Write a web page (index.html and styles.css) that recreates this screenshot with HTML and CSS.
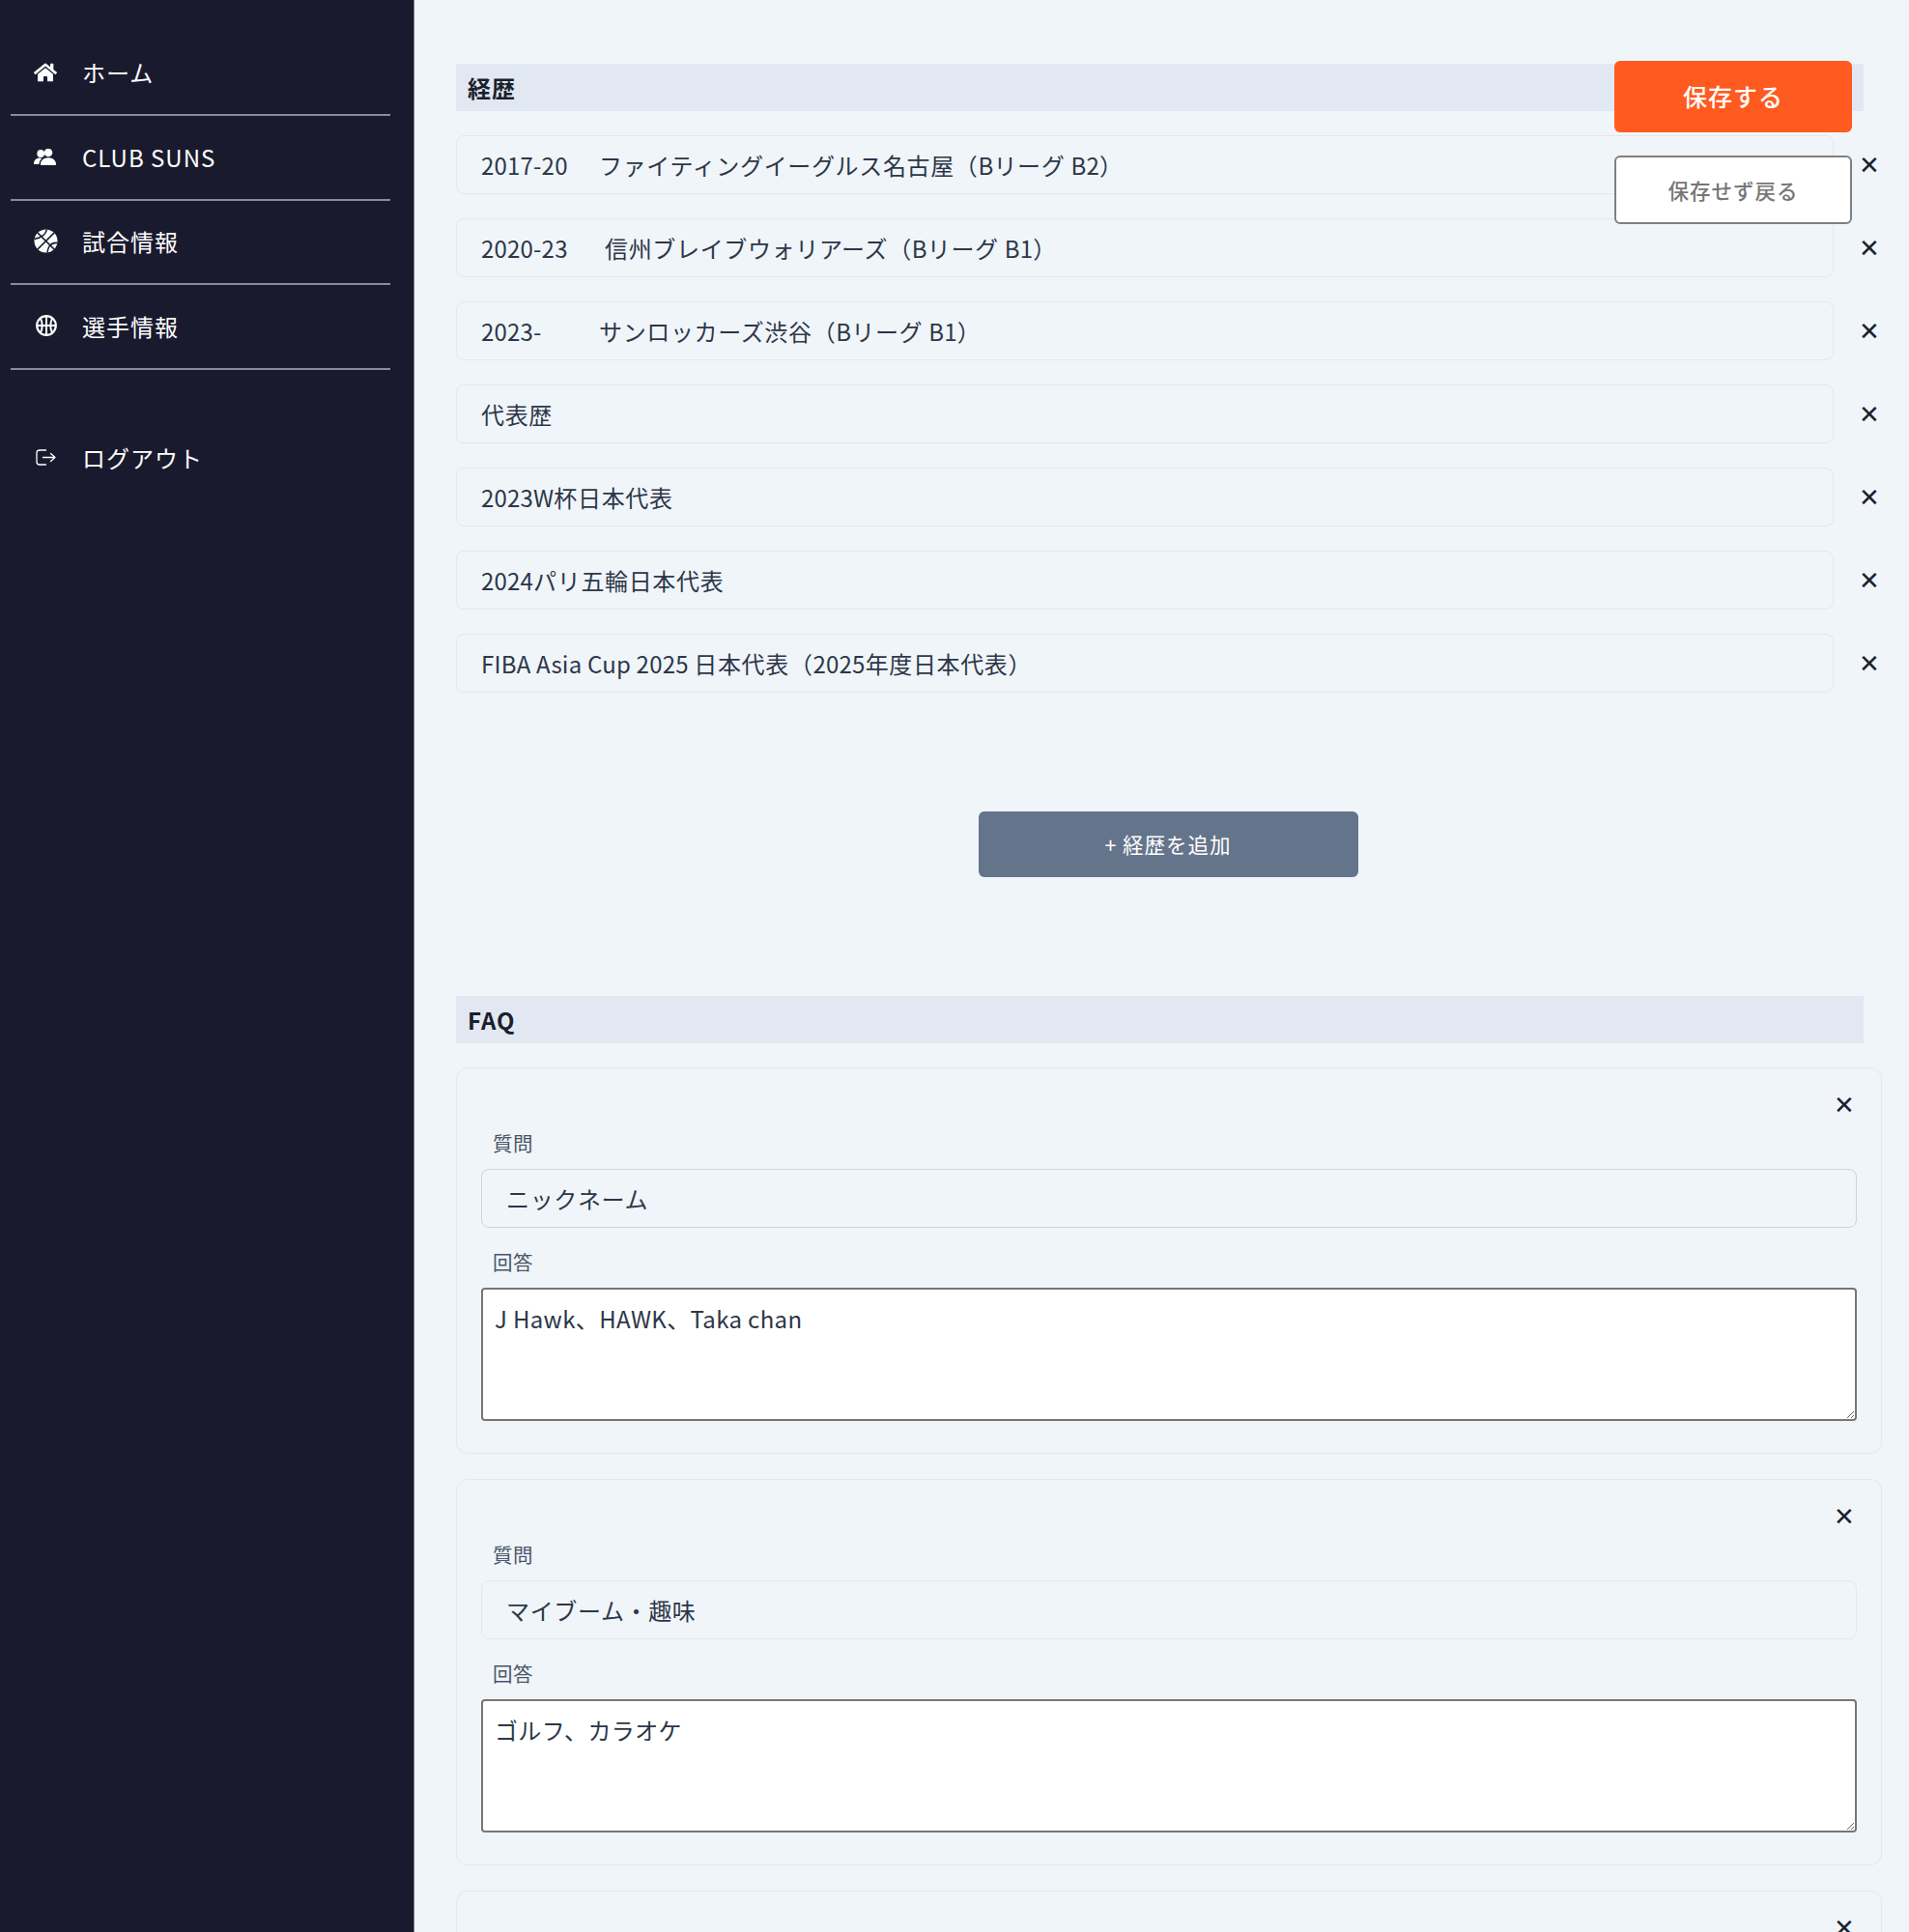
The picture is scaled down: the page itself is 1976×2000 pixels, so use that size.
FILE: index.html
```html
<!DOCTYPE html>
<html lang="ja">
<head>
<meta charset="utf-8">
<title>編集</title>
<link rel="stylesheet" href="styles.css">
</head>
<body>
<div class="app">
  <aside class="sidebar">
    <nav class="nav">
      <a class="nav-item">
        <span class="nav-icon"><svg class="ic-home" viewBox="0 0 576 512"><path fill="#fff" d="M280.37 148.26L96 300.11V464a16 16 0 0 0 16 16l112.06-.29a16 16 0 0 0 15.92-16V368a16 16 0 0 1 16-16h64a16 16 0 0 1 16 16v95.64a16 16 0 0 0 16 16.05L464 480a16 16 0 0 0 16-16V300L295.67 148.26a12.19 12.19 0 0 0-15.3 0zM571.6 251.47L488 182.56V44.05a12 12 0 0 0-12-12h-56a12 12 0 0 0-12 12v72.61L318.47 43a48 48 0 0 0-61 0L4.34 251.47a12 12 0 0 0-1.6 16.9l25.5 31A12 12 0 0 0 45.15 301l235.22-193.74a12.19 12.19 0 0 1 15.3 0L530.9 301a12 12 0 0 0 16.9-1.6l25.5-31a12 12 0 0 0-1.7-16.93z"/></svg></span>
        <span>ホーム</span>
      </a>
      <a class="nav-item">
        <span class="nav-icon"><svg class="ic-users" viewBox="0 0 24 17"><circle cx="7.2" cy="5" r="3.9" fill="#fff"/><circle cx="15" cy="4" r="4.3" fill="#fff"/><path fill="#fff" d="M0 16c0-4 2.5-6.4 6-6.4 1 0 1.800.2 2.500.5C6.700 11.400 5.600 13.400 5.500 16H0zM7 16c0-4 3.200-6.800 8-6.800s8 2.800 8 6.800c0 .6-.4 1-1 1H8c-.6 0-1-.4-1-1z"/></svg></span>
        <span>CLUB SUNS</span>
      </a>
      <a class="nav-item">
        <span class="nav-icon"><svg class="ic-ball" viewBox="0 0 26 26"><circle cx="13" cy="13" r="12.5" fill="#fff"/><path fill="none" stroke="#1a1a2e" stroke-width="1.600" d="M4 4l18 18M22 4L4 22M14 .5C13 6 9 9.500 .5 11M25.500 15c-6-.5-10 3-11 10.500"/></svg></span>
        <span>試合情報</span>
      </a>
      <a class="nav-item">
        <span class="nav-icon"><svg class="ic-ball2" viewBox="0 0 22 22"><circle cx="11" cy="11" r="9.800" fill="#1a1a2e" stroke="#fff" stroke-width="2.200"/><path fill="none" stroke="#fff" stroke-width="2" d="M11 1v20M1 11h20M4.500 3c3 4.500 3 11.500 0 16M17.500 3c-3 4.500-3 11.500 0 16"/></svg></span>
        <span>選手情報</span>
      </a>
      <a class="nav-item nav-logout">
        <span class="nav-icon"><svg class="ic-out" viewBox="0 0 21 17"><path fill="none" stroke="#fff" stroke-width="1.300" stroke-linejoin="round" stroke-linecap="round" d="M10.500 1H4A3 3 0 0 0 1 4v9a3 3 0 0 0 3 3h6.500M7.500 8.500h12.500M15.500 4.500l4.500 4-4.500 4"/></svg></span>
        <span>ログアウト</span>
      </a>
    </nav>
  </aside>
  <main class="main">
    <h2 class="section-title">経歴</h2>
    <div class="rows">
      <div class="row"><div class="field"><span class="year">2017-20　</span>ファイティングイーグルス名古屋（<span class="latin">B</span>リーグ <span class="latin">B2</span>）</div><span class="close">✕</span></div>
      <div class="row"><div class="field"><span class="year">2020-23　</span> 信州ブレイブウォリアーズ（<span class="latin">B</span>リーグ <span class="latin">B1</span>）</div><span class="close">✕</span></div>
      <div class="row"><div class="field"><span class="year">2023-　</span>サンロッカーズ渋谷（<span class="latin">B</span>リーグ <span class="latin">B1</span>）</div><span class="close">✕</span></div>
      <div class="row"><div class="field">代表歴</div><span class="close">✕</span></div>
      <div class="row"><div class="field"><span class="latin">2023W</span>杯日本代表</div><span class="close">✕</span></div>
      <div class="row"><div class="field"><span class="latin">2024</span>パリ五輪日本代表</div><span class="close">✕</span></div>
      <div class="row"><div class="field"><span class="latin">FIBA Asia Cup 2025 </span>日本代表（<span class="latin">2025</span>年度日本代表）</div><span class="close">✕</span></div>
    </div>
    <div class="add-wrap"><button class="add-btn">+ 経歴を追加</button></div>
    <h2 class="section-title">FAQ</h2>
    <div class="faq-list">
      <section class="faq-card">
        <div class="faq-close"><span class="close">✕</span></div>
        <label class="faq-label">質問</label>
        <div class="field field-faq field-focus">ニックネーム</div>
        <label class="faq-label faq-label-2">回答</label>
        <textarea class="answer">J Hawk、HAWK、Taka chan</textarea>
      </section>
      <section class="faq-card">
        <div class="faq-close"><span class="close">✕</span></div>
        <label class="faq-label">質問</label>
        <div class="field field-faq">マイブーム・趣味</div>
        <label class="faq-label faq-label-2">回答</label>
        <textarea class="answer">ゴルフ、カラオケ</textarea>
      </section>
      <section class="faq-card">
        <div class="faq-close"><span class="close">✕</span></div>
      </section>
    </div>
    <div class="actions">
      <button class="save-btn">保存する</button>
      <button class="back-btn">保存せず戻る</button>
    </div>
  </main>
</div>
</body>
</html>
```
FILE: styles.css
```css
* { box-sizing: border-box; }
html, body { margin: 0; height: 2000px; overflow: hidden; }
body {
  font-family: "Noto Sans CJK JP", "Noto Sans", sans-serif;
  background: #f0f5fa;
  color: #2d3748;
}
.app { display: flex; height: 2000px; }
.sidebar {
  width: 429px;
  flex: none;
  background: #1a1a2e;
  padding: 32.4px 24px 0 11px;
  border-right: 1px solid #6e6e80;
}
.nav { display: flex; flex-direction: column; }
.nav-item {
  display: flex;
  align-items: center;
  height: 87.6px;
  border-bottom: 2px solid #8a8a9e;
  color: #fff;
  font-size: 24px;
  letter-spacing: 1px;
}
.nav-item span:last-child { margin-top: -1px; }
.nav-logout { border-bottom: 0; margin-top: 47px; }
.nav-icon {
  width: 74px;
  flex: none;
  padding-left: 24px;
  display: flex;
}
.ic-home { width: 24px; height: 22px; }
.ic-users { width: 24px; height: 17px; margin-top: -1px; }
.ic-ball { width: 25px; height: 25px; margin-top: -1px; }
.ic-ball2 { width: 22px; height: 22px; margin: -1px 0 0 2px; }
.ic-out { width: 21px; height: 17px; margin: -1px 0 0 2px; }

.main {
  position: relative;
  flex: 1;
  min-width: 0;
  padding: 66px 28px 0 43px;
}
.section-title {
  margin: 0 19px 25px 0;
  height: 49px;
  background: #e2e8f1;
  padding: 0 12px;
  font-size: 24px;
  font-weight: 700;
  line-height: 49px;
  letter-spacing: 1px;
  color: #1a202c;
}
.rows { display: flex; flex-direction: column; gap: 25px; }
.row { display: flex; align-items: center; }
.field {
  height: 61px;
  line-height: 59px;
  padding: 0 25px;
  border: 1px solid #e2e8f0;
  border-radius: 8px;
  background: #f0f5fa;
  font-size: 24px;
  letter-spacing: .65px;
  color: #2d3748;
  white-space: pre;
}
.latin { letter-spacing: .2px; }
.year { display: inline-block; width: 122px; letter-spacing: .2px; }
.row .field { flex: 1; }
.close {
  font-size: 26px;
  line-height: 24px;
  width: 50px;
  flex: none;
  text-align: right;
  color: #1a202c;
  margin-top: -3px;
}
.row .close { padding-right: 2px; }
.add-wrap { display: flex; justify-content: center; padding: 123px 2px 123px 0; }
.add-btn {
  width: 393px;
  height: 68px;
  border: 0;
  border-radius: 6px;
  padding: 0 0 2px;
  background: #64748b;
  color: #fff;
  font: inherit;
  font-size: 21.5px;
  letter-spacing: 1px;
}
.faq-list { display: flex; flex-direction: column; gap: 26px; }
.faq-card {
  height: 400px;
  border: 1px solid #e2e8f0;
  border-radius: 12px;
  padding: 24px 25px;
  background: #f0f5fa;
}
.faq-close { display: flex; justify-content: flex-end; height: 26px; }
.faq-close .close { width: auto; margin: 0 2px 0 0; }
.faq-label {
  display: block;
  margin: 12.5px 0 13.5px 12px;
  font-size: 20.5px;
  line-height: 28px;
  letter-spacing: .5px;
  color: #4a5568;
}
.faq-label-2 { margin-top: 21px; margin-bottom: 13px; }
.field-focus { border-color: #cbd5e0; }
.answer {
  display: block;
  width: 100%;
  height: 138px;
  padding: 12px 12px;
  border: 2px solid #767676;
  border-radius: 4px;
  background: #fff;
  color: #2d3748;
  font: inherit;
  font-size: 24px;
  letter-spacing: .35px;
  line-height: 1.5;
}
.actions {
  position: absolute;
  top: 63px;
  left: 1242px;
  width: 246px;
  display: flex;
  flex-direction: column;
  gap: 24px;
}
.save-btn {
  height: 74px;
  border: 0;
  border-radius: 6px;
  padding: 0 0 2px;
  background: #ff5a1f;
  color: #fff;
  font: inherit;
  font-size: 25px;
  font-weight: 500;
  letter-spacing: 1px;
}
.back-btn {
  height: 71px;
  border: 2px solid #808080;
  border-radius: 6px;
  background: #fff;
  color: #777;
  font: inherit;
  font-size: 21.5px;
  font-weight: 500;
  letter-spacing: 1px;
}
```
